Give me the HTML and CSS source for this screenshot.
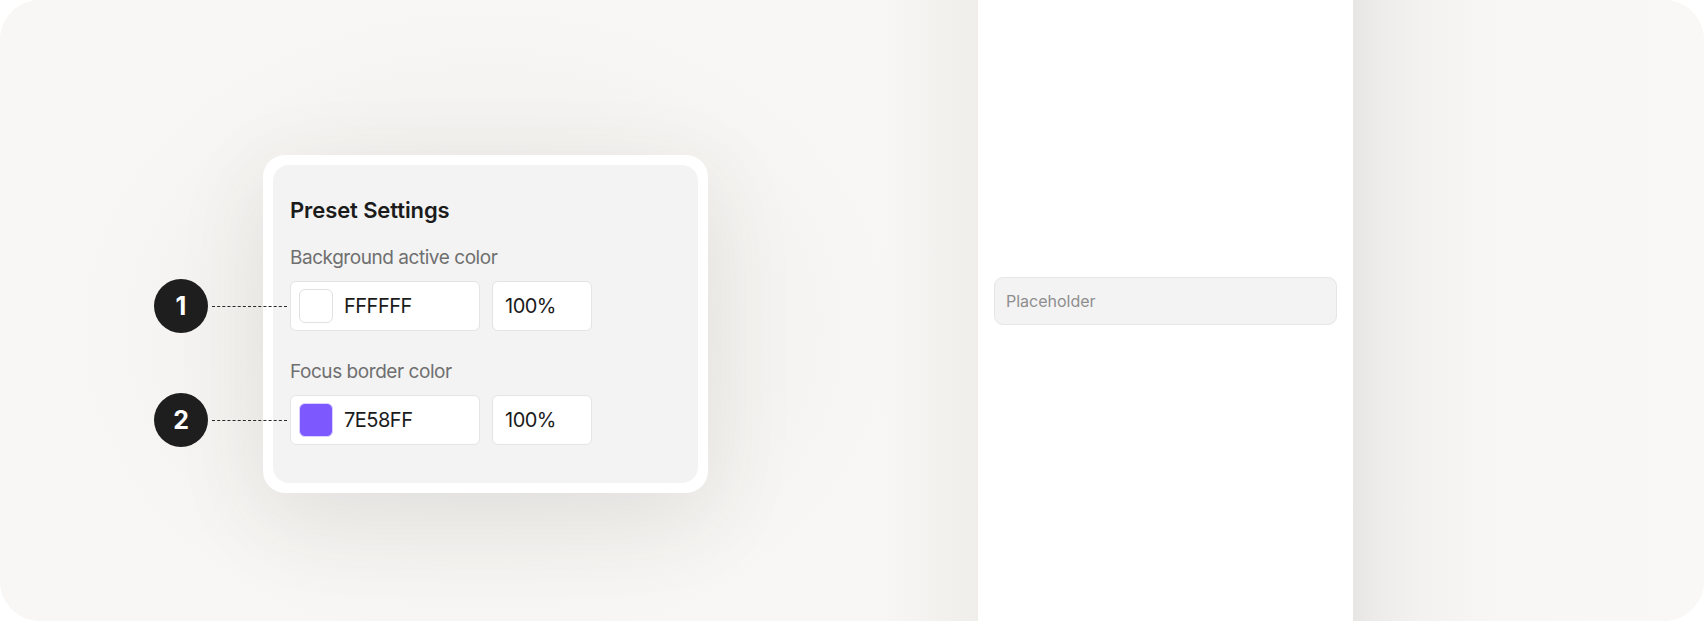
FILE: index.html
```html
<!DOCTYPE html>
<html lang="en">
<head>
<meta charset="utf-8">
<title>Preset Settings</title>
<link rel="stylesheet" href="styles.css">
</head>
<body>
<div class="stage">
  <section class="canvas">
    <div class="card">
      <div class="card-inner">
        <h2 class="title">Preset Settings</h2>
        <div class="field">
          <div class="label">Background active color</div>
          <div class="row">
            <span class="marker"><span class="dot">1</span><span class="leader"></span></span>
            <div class="color-input">
              <span class="swatch swatch-white"></span>
              <span class="value">FFFFFF</span>
            </div>
            <div class="pct-input">100%</div>
          </div>
        </div>
        <div class="field field-second">
          <div class="label">Focus border color</div>
          <div class="row">
            <span class="marker"><span class="dot">2</span><span class="leader"></span></span>
            <div class="color-input">
              <span class="swatch swatch-purple"></span>
              <span class="value">7E58FF</span>
            </div>
            <div class="pct-input">100%</div>
          </div>
        </div>
      </div>
    </div>
  </section>
  <section class="panel">
    <div class="text-input">Placeholder</div>
  </section>
  <section class="side"></section>
</div>
</body>
</html>
```

FILE: styles.css
```css
* { box-sizing: border-box; }

html, body {
  margin: 0;
  padding: 0;
  background: #ffffff;
  font-family: Inter, "Noto Sans", "Liberation Sans", sans-serif;
}

.stage {
  width: 1704px;
  height: 621px;
  border-radius: 40px;
  overflow: hidden;
  display: flex;
  background: #f8f7f5;
}

.canvas {
  width: 978px;
  flex: none;
  padding: 155px 0 0 263px;
  background:
    linear-gradient(90deg, rgba(248,247,245,0) 0, rgba(248,247,245,0) 880px, rgba(225,220,215,0.35) 978px),
    radial-gradient(ellipse 420px 330px at 485px 330px, rgba(228,225,222,0.9) 0, rgba(240,238,235,0.6) 55%, rgba(248,247,245,0) 100%),
    #f8f7f5;
}

.card {
  width: 445px;
  height: 338px;
  padding: 10px;
  background: #ffffff;
  border-radius: 22px;
  box-shadow: 0 24px 90px rgba(70, 55, 45, 0.10);
}

.card-inner {
  height: 100%;
  background: #f3f3f3;
  border-radius: 16px;
  padding: 31px 18px 0 17px;
}

.title {
  margin: 0;
  font-size: 22px;
  line-height: 28px;
  font-weight: 600;
  color: #1b1b1b;
  letter-spacing: -0.1px;
}

.field {
  margin-top: 22px;
}

.field-second {
  margin-top: 29px;
}

.label {
  font-size: 19px;
  line-height: 24px;
  color: #6f6f6f;
  letter-spacing: -0.45px;
}

.row {
  position: relative;
  display: flex;
  gap: 12px;
  margin-top: 11px;
}

.marker {
  position: absolute;
  left: -136px;
  top: -2px;
  display: flex;
  align-items: center;
  height: 54px;
}

.dot {
  width: 54px;
  height: 54px;
  border-radius: 50%;
  background: #1e1e1e;
  color: #ffffff;
  display: flex;
  align-items: center;
  justify-content: center;
  font-size: 25px;
  font-weight: 700;
}

.leader {
  width: 75px;
  margin-left: 4px;
  border-top: 1.3px dashed #2a2a2a;
}

.color-input {
  width: 190px;
  height: 50px;
  background: #ffffff;
  border: 1.5px solid #e4e4e4;
  border-radius: 6px;
  display: flex;
  align-items: center;
  padding-left: 8px;
  gap: 11px;
}

.swatch {
  width: 34px;
  height: 34px;
  border-radius: 6px;
  flex: none;
}

.swatch-white {
  background: #ffffff;
  border: 1.5px solid #e2e2e2;
}

.swatch-purple {
  background: #7e58ff;
  border: 1.5px solid #d9d0ff;
}

.value,
.pct-input {
  font-size: 20px;
  color: #1b1b1b;
  letter-spacing: -0.5px;
}

.pct-input {
  width: 100px;
  height: 50px;
  background: #ffffff;
  border: 1.5px solid #e4e4e4;
  border-radius: 6px;
  display: flex;
  align-items: center;
  padding-left: 12px;
}

.panel {
  width: 375px;
  flex: none;
  background: #ffffff;
  padding: 277px 16px 0 16px;
}

.text-input {
  height: 48px;
  background: #f3f3f3;
  border: 1px solid #e6e6e6;
  border-radius: 9px;
  display: flex;
  align-items: center;
  padding-left: 11px;
  font-size: 16px;
  color: #8e8e8e;
}

.side {
  flex: 1;
  background: linear-gradient(90deg, #e7e6e4 0, #eeedeb 30px, #f3f2f0 70px, #f8f7f5 150px, #f9f8f6 100%);
}
```
